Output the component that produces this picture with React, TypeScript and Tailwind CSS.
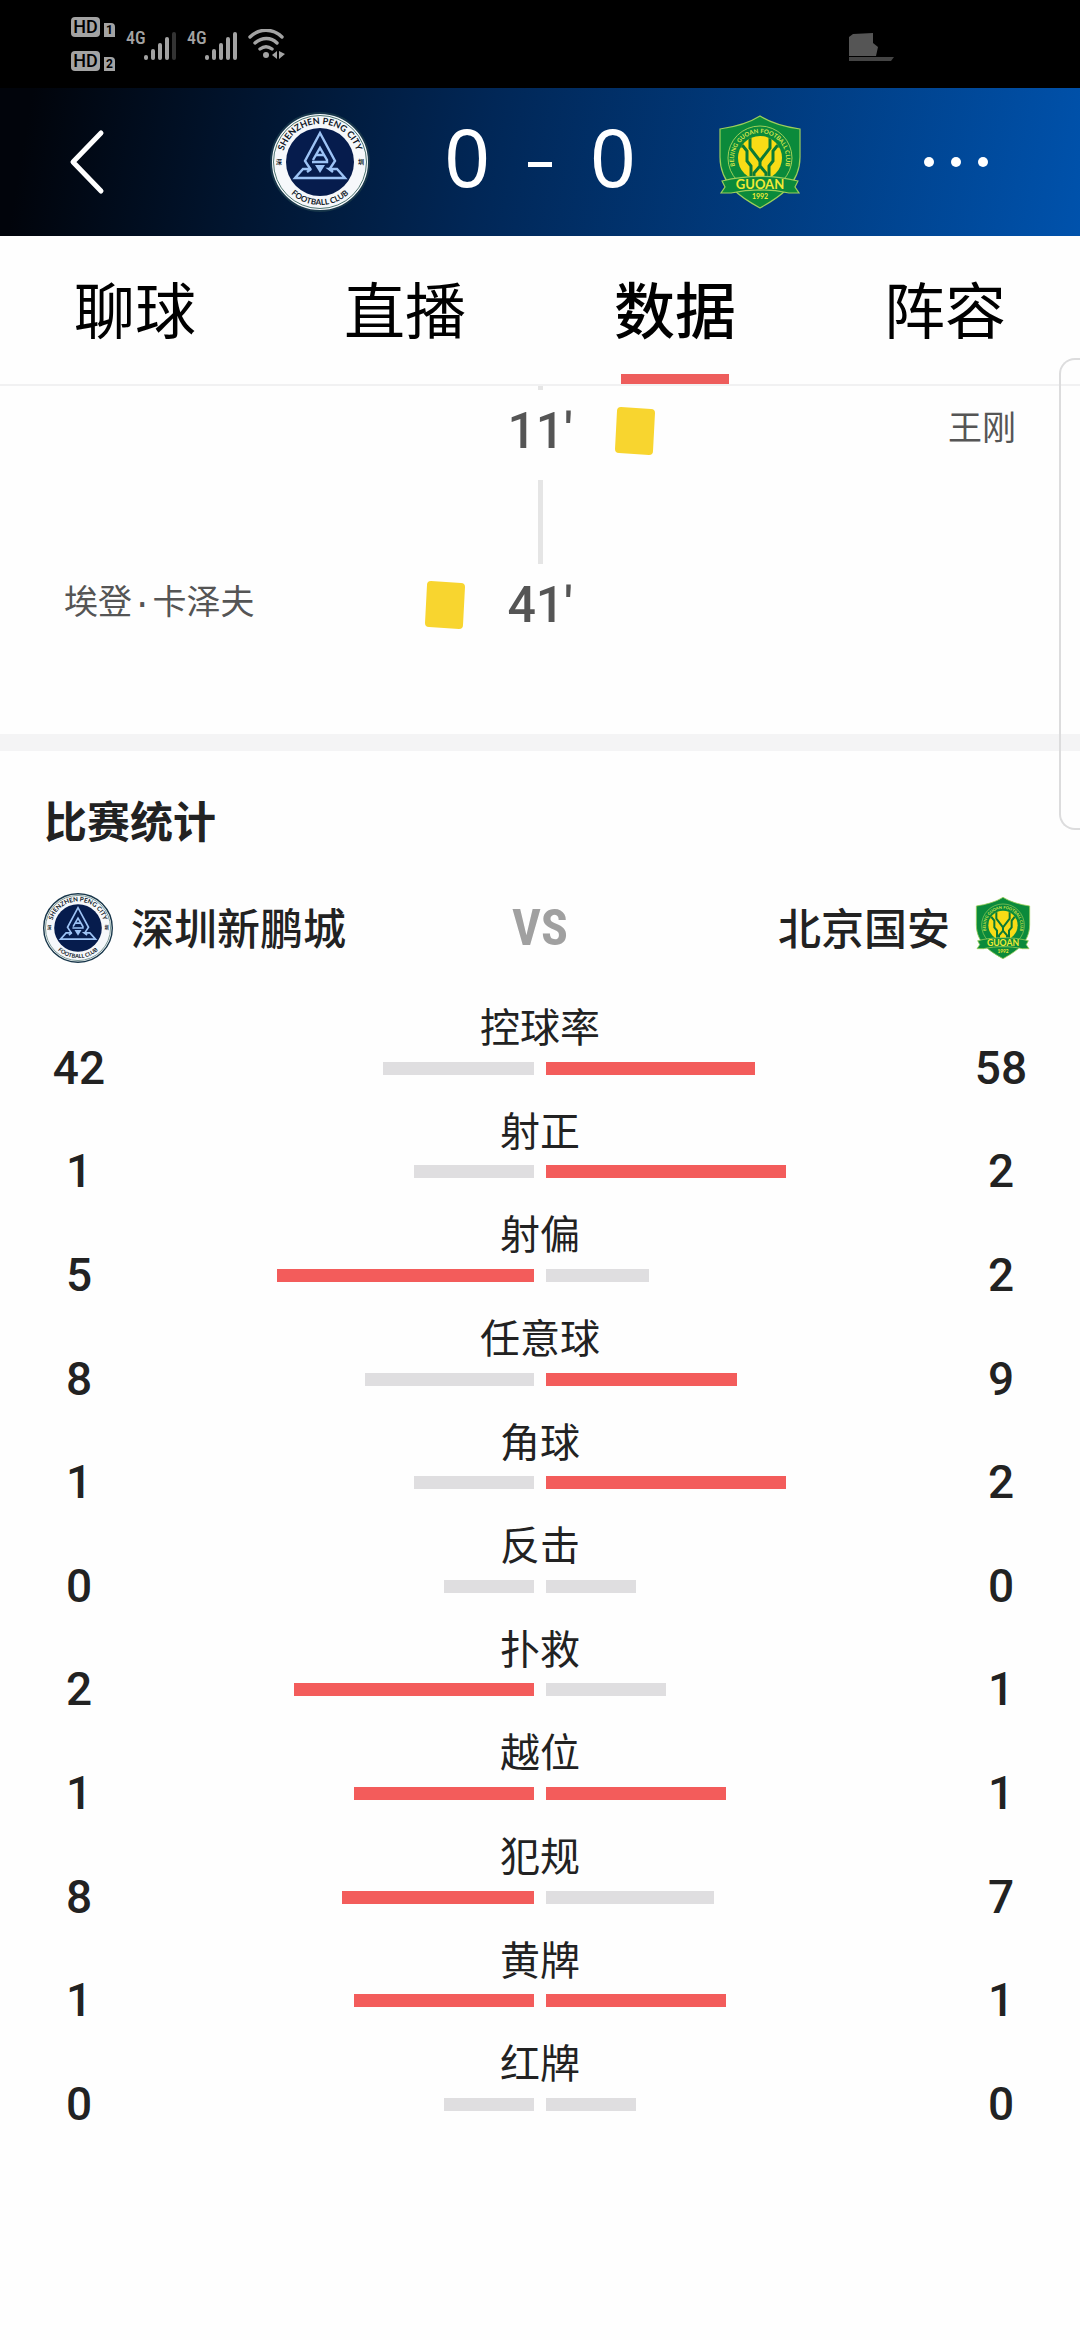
import React from 'react';

const CJK = "font-['Noto_Sans_CJK_SC',sans-serif]";
const NUM = "font-['Roboto','Noto_Sans_CJK_SC',sans-serif]";
// monospaced latin gives the middle dot in names its wider advance
const NAME = "font-['Liberation_Mono','Noto_Sans_CJK_SC',sans-serif]";

type Stat = { label: string; home: number; away: number };
type Side = 'home' | 'away';

const stats: Stat[] = [
  { label: '控球率', home: 42, away: 58 },
  { label: '射正', home: 1, away: 2 },
  { label: '射偏', home: 5, away: 2 },
  { label: '任意球', home: 8, away: 9 },
  { label: '角球', home: 1, away: 2 },
  { label: '反击', home: 0, away: 0 },
  { label: '扑救', home: 2, away: 1 },
  { label: '越位', home: 1, away: 1 },
  { label: '犯规', home: 8, away: 7 },
  { label: '黄牌', home: 1, away: 1 },
  { label: '红牌', home: 0, away: 0 },
];

const tabs = ['聊球', '直播', '数据', '阵容'];

const ShenzhenLogo = ({ className, id }: { className: string; id: string }) => (
  <svg viewBox="0 0 100 100" className={className} role="img" aria-label="深圳新鹏城">
    <defs>
      <path id={`${id}-top`} d="M12 50a38 38 0 0 1 76 0" />
      <path id={`${id}-bottom`} d="M7 50a43 43 0 0 0 86 0" />
    </defs>
    <circle cx="50" cy="50" r="49" fill="#f6f8fb" stroke="#17364a" strokeWidth="2" />
    <circle cx="50" cy="50" r="46.5" fill="none" stroke="#4d7470" strokeWidth="1" />
    <circle cx="50" cy="50" r="34" fill="#061c4d" />
    <g fill="#111827" fontFamily="Lato, sans-serif" fontWeight="700" textAnchor="middle">
      <text fontSize="9">
        <textPath href={`#${id}-top`} startOffset="50%">SHENZHEN PENG CITY</textPath>
      </text>
      <text fontSize="8">
        <textPath href={`#${id}-bottom`} startOffset="50%">FOOTBALL CLUB</textPath>
      </text>
      <g fontFamily="'Noto Sans CJK SC', sans-serif" fontSize="6">
        <text x="9" y="52">深</text>
        <text x="91" y="52">圳</text>
      </g>
    </g>
    <g fill="none" stroke="#9dc3f5" strokeWidth="2.4">
      <path d="M41 58l-6-9 15-28 15 28-6 9" />
      <path d="M43 48l7-12 7 12v2H42" />
      <path d="M41 57h-8l-8 9h50l-8-9h-8l4 3" />
      <path d="M41 57l-4 3M46 43h8" />
    </g>
    <path d="M45 53h10l-5 8z" fill="#9dc3f5" />
  </svg>
);

const GuoanLogo = ({ className, id }: { className: string; id: string }) => (
  <svg viewBox="0 0 84 96" className={className} role="img" aria-label="北京国安">
    <defs>
      <path id={`${id}-arc`} d="M20 59a26 26 0 1 1 44 0" />
      <clipPath id={`${id}-ball`}>
        <circle cx="42" cy="44" r="22" />
      </clipPath>
    </defs>
    <path
      d="M42 2C31 9 16 13 2 15v28c0 28 22 41 40 51 18-10 40-23 40-51V15C68 13 53 9 42 2z"
      fill="#0b8a3b"
      stroke="#9ccf5a"
      strokeWidth="1.2"
    />
    <circle cx="42" cy="44" r="32" fill="none" stroke="#9ccf5a" strokeWidth="1" />
    <text fill="#d6e64a" fontFamily="Lato, sans-serif" fontSize="6" fontWeight="700" textAnchor="middle">
      <textPath href={`#${id}-arc`} startOffset="50%">BEIJING GUOAN FOOTBALL CLUB</textPath>
    </text>
    <circle cx="42" cy="44" r="22" fill="#f8dc16" />
    <g clipPath={`url(#${id}-ball)`} fill="none" stroke="#0b7a35" strokeWidth="3">
      <path d="M32 20v14l10 13 10-13V20" />
      <path d="M20 32h5l4 5v10l4 5v16" />
      <path d="M64 32h-5l-4 5v10l-4 5v16" />
      <path d="M42 46v6M36 66v-7l6-7 6 7v7" />
    </g>
    <path
      d="M4 67c25-6 51-6 76 0l-3 6 4 6H71c-19-4-39-4-58 0H3l4-6z"
      fill="#0b8a3b"
      stroke="#9ccf5a"
      strokeWidth="1.2"
    />
    <text x="42" y="75" fill="#f1ea35" fontFamily="Lato, sans-serif" fontSize="13" fontWeight="700" textAnchor="middle">
      GUOAN
    </text>
    <text x="42" y="85" fill="#f1ea35" fontFamily="Lato, sans-serif" fontSize="7" fontWeight="700" textAnchor="middle">
      1992
    </text>
  </svg>
);

const HdBadge = ({ sim }: { sim: number }) => (
  <div className="flex items-end gap-1">
    <span className="flex h-5 w-[29px] items-center justify-center rounded-sm bg-[#a3a3a3] font-['Roboto',sans-serif] text-[18px] font-medium leading-none text-black">
      HD
    </span>
    <span className="flex h-[14px] w-[11px] items-center justify-center rounded-tr-sm bg-[#a3a3a3] font-['Roboto',sans-serif] text-[12px] font-bold leading-none text-black">
      {sim}
    </span>
  </div>
);

const Signal = ({ bars }: { bars: number }) => (
  <div className="flex">
    <span className="w-[18px] font-['Roboto_Condensed','Roboto',sans-serif] text-[18px] font-medium leading-none text-[#a3a3a3]">
      4G
    </span>
    <svg width="34" height="32" viewBox="0 0 34 32" strokeWidth="4" strokeLinecap="round">
      {[26, 20, 14, 8, 3].map((y, i) => (
        <path key={y} d={`M${2 + i * 7} ${y + 2}V29`} stroke={i < bars ? '#a3a3a3' : '#333'} />
      ))}
    </svg>
  </div>
);

const StatusBar = () => (
  <div className="flex h-[88px] items-start bg-black pl-[71px] pr-[186px] pt-[17px]">
    <div className="flex flex-col gap-[14px]">
      <HdBadge sim={1} />
      <HdBadge sim={2} />
    </div>
    <div className="ml-[11px] mt-3 flex items-start gap-[9px]">
      <Signal bars={4} />
      <Signal bars={5} />
      <svg width="38" height="32" viewBox="0 0 38 32" fill="none" stroke="#a3a3a3" strokeWidth="3.4" strokeLinecap="round">
        <path d="M2 8C11-1 25-1 34 8M7 14c7-6 16-6 22 0M12 20c4-3 8-3 12 0" />
        <circle cx="18" cy="26" r="3" fill="#a3a3a3" stroke="none" />
        <path d="M29 22v8l-5-4zM31 22v8l6-5z" fill="#a3a3a3" stroke="none" />
      </svg>
    </div>
    <svg className="ml-auto mt-4" width="46" height="28" viewBox="0 0 46 28">
      <path d="M1 4l4-3 20-1v10l5 4-2 9H1z" fill="#555" />
      <path d="M1 24h45l-3 4H1z" fill="#444" />
    </svg>
  </div>
);

const Header = () => (
  <header className="grid h-[148px] grid-cols-[270px_1fr_270px] items-center bg-linear-[100deg] from-[#01040b] from-3% via-[#012757] via-45% to-[#0052ac]">
    <button aria-label="返回" className="ml-[68px] w-fit">
      <svg width="38" height="66" viewBox="0 0 38 66" fill="none" stroke="#fff" strokeWidth="5" strokeLinecap="round" strokeLinejoin="round">
        <path d="M33 4L5 33l28 29" />
      </svg>
    </button>
    <div className="flex items-center justify-between">
      <ShenzhenLogo id="sz-header" className="size-[100px]" />
      <div className="flex items-center gap-[38px] pb-3 pr-2 font-['Noto_Sans',sans-serif] text-[80px] leading-none text-white">
        <span>0</span>
        <span className="mt-4 h-[5px] w-[24px] bg-white" />
        <span>0</span>
      </div>
      <GuoanLogo id="ga-header" className="mr-2 h-[96px] w-[84px]" />
    </div>
    <button aria-label="更多" className="ml-auto mr-[92px] flex gap-[17px]">
      <span className="size-[10px] rounded-full bg-white" />
      <span className="size-[10px] rounded-full bg-white" />
      <span className="size-[10px] rounded-full bg-white" />
    </button>
  </header>
);

const TabBar = () => (
  <nav className="grid h-[150px] grid-cols-4 border-b-2 border-[#f1f1f2]">
    {tabs.map((tab) => {
      const active = tab === '数据';
      return (
        <button
          key={tab}
          className={`flex flex-col items-center justify-between text-[61px] leading-none text-black ${active ? 'font-medium' : ''}`}
        >
          <span className="pt-[41px]">{tab}</span>
          {active && <span className="h-[10px] w-[108px] bg-[#ee5d5c]" />}
        </button>
      );
    })}
  </nav>
);

const YellowCard = () => (
  <svg width="40" height="50" viewBox="0 0 40 50" role="img" aria-label="黄牌">
    <path d="M6 1l30 2q4 0 4 4l-2 38q0 4-4 4L4 47q-4 0-4-4L2 5q0-4 4-4z" fill="#f8d52f" />
  </svg>
);

const EventRow = ({ minute, player, side }: { minute: number; player: string; side: Side }) => (
  <li className="grid h-[90px] grid-cols-[1fr_150px_1fr] items-center pb-2 text-[#555]">
    <div className="flex items-center justify-between pl-16">
      {side === 'home' && (
        <>
          <span className={`text-[34px] ${NAME}`}>{player}</span>
          <YellowCard />
        </>
      )}
    </div>
    <time className={`text-center text-[50px] font-medium leading-none ${NUM}`}>{minute}′</time>
    <div className="flex items-center justify-between pr-16">
      {side === 'away' && (
        <>
          <YellowCard />
          <span className={`text-[34px] ${NAME}`}>{player}</span>
        </>
      )}
    </div>
  </li>
);

const Timeline = () => (
  <ul className="flex flex-col border-b-[17px] border-[#f4f4f5] pb-[80px]">
    <li className="mx-auto h-1 w-[5px] bg-[#e5e5e5]" />
    <EventRow minute={11} player="王刚" side="away" />
    <li className="mx-auto h-[84px] w-[5px] bg-[#e5e5e5]" />
    <EventRow minute={41} player="埃登·卡泽夫" side="home" />
  </ul>
);

const Bar = ({ value, total, leading }: { value: number; total: number; leading: boolean }) => (
  <div
    className={`h-[13px] ${leading ? 'bg-[#f35c5b]' : 'bg-[#dfdee0]'}`}
    style={{ width: `${total === 0 ? 25 : (value / total) * 100}%` }}
  />
);

const StatRow = ({ label, home, away }: Stat) => {
  const total = home + away;
  return (
    <li className="grid grid-cols-[80px_1fr_80px] text-center text-[#222]">
      <span className={`self-end pb-2.5 text-[46px] font-medium leading-none ${NUM}`}>{home}</span>
      <div className="flex flex-col items-center justify-between pb-[26px]">
        <span className="text-[40px] leading-[56px]">{label}</span>
        <div className="grid w-[732px] max-w-full grid-cols-2 gap-3">
          <div className="flex justify-end">
            <Bar value={home} total={total} leading={total > 0 && home >= away} />
          </div>
          <div className="flex">
            <Bar value={away} total={total} leading={total > 0 && away >= home} />
          </div>
        </div>
      </div>
      <span className={`self-end pb-2.5 text-[46px] font-medium leading-none ${NUM}`}>{away}</span>
    </li>
  );
};

const MatchStats = () => (
  <section className="pt-[38px]">
    <h2 className="px-11 text-[43px] font-bold leading-[60px] text-[#222]">比赛统计</h2>
    <div className="mt-11 grid grid-cols-[1fr_auto_1fr] items-center px-[43px] text-[43px] font-medium leading-[66px] text-[#222]">
      <div className="flex items-center gap-[18px]">
        <ShenzhenLogo id="sz-stats" className="size-[70px]" />
        <span className="pb-1">深圳新鹏城</span>
      </div>
      <span className="font-['Roboto_Condensed','Liberation_Sans_Narrow','Noto_Sans',sans-serif] text-[50px] font-bold text-[#a0a0a0]">
        VS
      </span>
      <div className="flex items-center justify-end gap-[25px]">
        <span className="pb-1">北京国安</span>
        <GuoanLogo id="ga-stats" className="mr-[6px] h-[64px] w-[56px]" />
      </div>
    </div>
    <ul className="mt-[34px] grid min-h-[1140px] auto-rows-fr px-[39px]">
      {stats.map((s) => (
        <StatRow key={s.label} {...s} />
      ))}
    </ul>
  </section>
);

const App: React.FC = () => (
  <div className={`relative min-h-screen overflow-hidden bg-[#fefefe] ${CJK}`}>
    <StatusBar />
    <Header />
    <main>
      <TabBar />
      <Timeline />
      <MatchStats />
    </main>
    {/* Edge drawer handle floating over the page */}
    <div className="absolute -right-px top-[358px] h-[472px] w-[22px] rounded-l-2xl border-2 border-r-0 border-[#dcdcdd]" />
  </div>
);

export default App;
